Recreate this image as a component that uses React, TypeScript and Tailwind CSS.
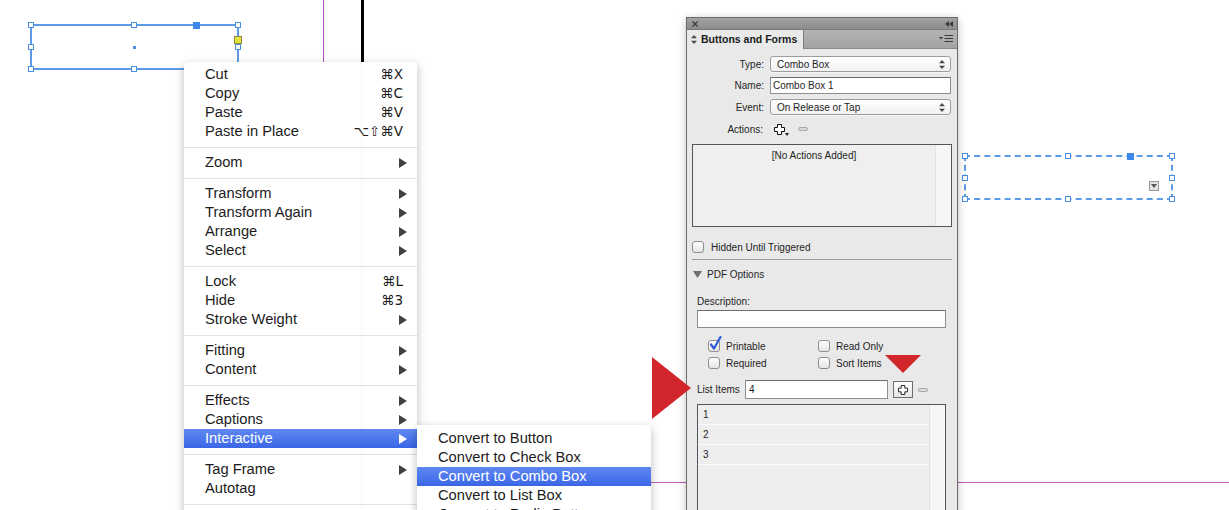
import React from "react";

type Item = { label: string; sc?: string; sub?: boolean; hi?: boolean };

const groups: Item[][] = [
  [
    { label: "Cut", sc: "⌘X" },
    { label: "Copy", sc: "⌘C" },
    { label: "Paste", sc: "⌘V" },
    { label: "Paste in Place", sc: "⌥⇧⌘V" },
  ],
  [{ label: "Zoom", sub: true }],
  [
    { label: "Transform", sub: true },
    { label: "Transform Again", sub: true },
    { label: "Arrange", sub: true },
    { label: "Select", sub: true },
  ],
  [
    { label: "Lock", sc: "⌘L" },
    { label: "Hide", sc: "⌘3" },
    { label: "Stroke Weight", sub: true },
  ],
  [
    { label: "Fitting", sub: true },
    { label: "Content", sub: true },
  ],
  [
    { label: "Effects", sub: true },
    { label: "Captions", sub: true },
    { label: "Interactive", sub: true, hi: true },
  ],
  [{ label: "Tag Frame", sub: true }, { label: "Autotag" }],
  [{ label: "Display Performance", sub: true }],
];

const subItems = [
  "Convert to Button",
  "Convert to Check Box",
  "Convert to Combo Box",
  "Convert to List Box",
  "Convert to Radio Button",
];

function Arrow({ white }: { white?: boolean }) {
  return (
    <svg width="8" height="10" viewBox="0 0 8 10" className="block">
      <path d="M0 0 L8 5 L0 10 Z" fill={white ? "#ffffff" : "#404040"} />
    </svg>
  );
}

function MenuRow({ it }: { it: Item }) {
  return (
    <div
      className={
        "flex h-[19px] items-center justify-between pl-[21px] pr-[10px] text-[14.7px] leading-[19px] " +
        (it.hi ? "bg-gradient-to-b from-[#6088f2] to-[#3a66e6] text-white" : "text-[#1c1c1c]")
      }
    >
      <span>{it.label}</span>
      {it.sc ? <span className="mr-[4px] font-['DejaVu_Sans','Liberation_Sans',sans-serif] text-[13.5px]">{it.sc}</span> : null}
      {it.sub ? <Arrow white={it.hi} /> : null}
    </div>
  );
}

function Sep() {
  return (
    <div className="h-[12px] pt-[6px]">
      <div className="h-px bg-[#e2e2e2]" />
    </div>
  );
}

function Handle({ cls, filled }: { cls: string; filled?: boolean }) {
  return (
    <div
      className={
        "absolute " +
        cls +
        (filled ? " w-[7px] h-[7px] bg-[#3d86ea]" : " w-[6px] h-[6px] bg-white border border-[#4a8ee0]")
      }
    />
  );
}

function UpDown() {
  return (
    <svg width="6" height="9" viewBox="0 0 6 9" className="block">
      <path d="M3 0 L6 3.3 L0 3.3 Z M3 9 L6 5.7 L0 5.7 Z" fill="#4a4a4a" />
    </svg>
  );
}

function Select({ text }: { text: string }) {
  return (
    <div className="ml-[6px] flex h-[16px] w-[181px] items-center justify-between rounded-[3px] border border-[#9c9c9c] bg-gradient-to-b from-white to-[#f1f1f1] pl-[6px] pr-[5px] shadow-[0_1px_0_rgba(255,255,255,0.6)]">
      <span>{text}</span>
      <UpDown />
    </div>
  );
}

function Check({ checked }: { checked?: boolean }) {
  return (
    <div className="relative h-[12px] w-[12px] shrink-0 rounded-[3px] border border-[#8f8f8f] bg-gradient-to-b from-white to-[#e4e4e4]">
      {checked ? (
        <svg width="14" height="15" viewBox="0 0 14 15" className="absolute left-[0px] top-[-5px]">
          <path d="M2 8.5 L5 12.5 L11.5 1" fill="none" stroke="#2d5cd2" strokeWidth="2.2" strokeLinecap="round" strokeLinejoin="round" />
        </svg>
      ) : null}
    </div>
  );
}

function HollowPlus({ size = 11 }: { size?: number }) {
  return (
    <svg width={size} height={size} viewBox="0 0 11 11" className="block">
      <path d="M3.5 0.5 H7.5 V3.5 H10.5 V7.5 H7.5 V10.5 H3.5 V7.5 H0.5 V3.5 H3.5 Z" fill="#fff" stroke="#111" strokeWidth="1" />
    </svg>
  );
}

function Minus() {
  return <div className="h-[4px] w-[10px] rounded-[2px] border border-[#a8a8a8] bg-[#dcdcdc]" />;
}

export default function App() {
  return (
    <div className="relative h-[510px] w-[1229px] overflow-hidden bg-white font-['Liberation_Sans','DejaVu_Sans',sans-serif]">
      {/* guides */}
      <div className="absolute left-[323px] top-0 h-[70px] w-px bg-[#b050c4]" />
      <div className="absolute left-[361px] top-0 h-[70px] w-[3px] bg-black" />
      <div className="absolute left-[640px] top-[482px] h-px w-[589px] bg-[#c458c0]" />

      {/* left frame */}
      <div className="absolute left-[30px] top-[24px] h-[46px] w-[209px] border-2 border-[#5c9be6]" />
      <Handle cls="left-[28px] top-[22px]" />
      <Handle cls="left-[131px] top-[22px]" />
      <Handle cls="left-[235px] top-[22px]" />
      <Handle cls="left-[28px] top-[44px]" />
      <Handle cls="left-[235px] top-[44px]" />
      <Handle cls="left-[28px] top-[66px]" />
      <Handle cls="left-[131px] top-[66px]" />
      <Handle cls="left-[235px] top-[66px]" />
      <Handle cls="left-[193px] top-[22px]" filled />
      <div className="absolute left-[234px] top-[36px] h-[8px] w-[8px] border border-[#8a8a3a] bg-[#e6e23a]" />
      <div className="absolute left-[133px] top-[46px] h-[3px] w-[3px] bg-[#4a8ee0]" />

      {/* right frame */}
      <div className="absolute left-[964px] top-[155px] h-[45px] w-[209px] border-2 border-dashed border-[#5c9be6]" />
      <Handle cls="left-[962px] top-[153px]" />
      <Handle cls="left-[1065px] top-[153px]" />
      <Handle cls="left-[1169px] top-[153px]" />
      <Handle cls="left-[962px] top-[175px]" />
      <Handle cls="left-[1169px] top-[175px]" />
      <Handle cls="left-[962px] top-[196px]" />
      <Handle cls="left-[1065px] top-[196px]" />
      <Handle cls="left-[1169px] top-[196px]" />
      <Handle cls="left-[1127px] top-[153px]" filled />
      <div className="absolute left-[1149px] top-[181px] flex h-[10px] w-[10px] items-center justify-center border border-[#9a9a9a] bg-[#e2e2e2]">
        <svg width="6" height="4" viewBox="0 0 6 4"><path d="M0 0 H6 L3 4 Z" fill="#555" /></svg>
      </div>

      {/* context menu */}
      <div className="absolute left-[184px] top-[62px] h-[480px] w-[233px] overflow-hidden rounded-t-[4px] bg-white pt-[3px] shadow-[0_3px_10px_rgba(0,0,0,0.28)]">
        <div className="pointer-events-none absolute left-[177px] top-0 h-full w-px bg-[#f7f7f7]" />
        {groups.map((g, gi) => (
          <div key={gi} className="relative">
            {g.map((it) => (
              <MenuRow key={it.label} it={it} />
            ))}
            {gi < groups.length - 1 ? <Sep /> : null}
          </div>
        ))}
      </div>

      {/* submenu */}
      <div className="absolute left-[417px] top-[425px] h-[120px] w-[234px] rounded-tr-[4px] bg-white pt-[4px] shadow-[0_3px_10px_rgba(0,0,0,0.28)]">
        {subItems.map((s, i) => (
          <div
            key={s}
            className={
              "flex h-[19px] items-center pl-[21px] text-[14.7px] leading-[19px] " +
              (i === 2 ? "bg-gradient-to-b from-[#6088f2] to-[#3a66e6] text-white" : "text-[#1c1c1c]")
            }
          >
            {s}
          </div>
        ))}
      </div>

      {/* panel */}
      <div className="absolute left-[686px] top-[17px] h-[510px] w-[272px] overflow-hidden border border-[#6a6a6a] bg-[#e9e9e9] text-[10px] text-[#1e1e1e] shadow-[0_2px_8px_rgba(0,0,0,0.25)]">
        {/* title bar */}
        <div className="flex h-[11px] shrink-0 items-center justify-between bg-gradient-to-b from-[#a3a3a3] to-[#8c8c8c] pl-[5px] pr-[4px]">
          <svg width="6" height="6" viewBox="0 0 6 6" className="block">
            <path d="M0.5 0.5 L5.5 5.5 M5.5 0.5 L0.5 5.5" stroke="#3a3a3a" strokeWidth="1.2" />
          </svg>
          <svg width="8" height="6" viewBox="0 0 8 6" className="block">
            <path d="M0 3 L4 0 V6 Z M4 3 L8 0 V6 Z" fill="#3a3a3a" />
          </svg>
        </div>
        {/* tab row */}
        <div className="flex h-[20px] shrink-0 border-t border-[#7a7a7a]">
          <div className="flex w-[117px] items-center border-r border-[#7d7d7d] bg-[#e9e9e9] pl-[4px]">
            <UpDown />
            <span className="ml-[4px] text-[10.5px] font-bold text-[#1a1a1a]">Buttons and Forms</span>
          </div>
          <div className="flex flex-1 items-center justify-end border-b border-[#8a8a8a] bg-gradient-to-b from-[#b4b4b4] to-[#a3a3a3] pr-[4px]">
            <svg width="14" height="8" viewBox="0 0 14 8" className="block">
              <path d="M0 2 H4 L2 4.5 Z" fill="#3a3a3a" />
              <path d="M5.5 0.5 H14 M5.5 3.5 H14 M5.5 6.5 H14" stroke="#3a3a3a" strokeWidth="1" />
            </svg>
          </div>
        </div>

        {/* body */}
        <div className="flex flex-col pt-[7px]">
          <div className="flex h-[16px] shrink-0 items-center">
            <div className="w-[77px] text-right">Type:</div>
            <Select text="Combo Box" />
          </div>
          <div className="mt-[5px] flex h-[17px] shrink-0 items-center">
            <div className="w-[77px] text-right">Name:</div>
            <div className="ml-[6px] flex h-[17px] w-[181px] items-center border border-[#8e8e8e] border-t-[#6e6e6e] bg-white pl-[2px]">
              Combo Box 1
            </div>
          </div>
          <div className="mt-[5px] flex h-[16px] shrink-0 items-center">
            <div className="w-[77px] text-right">Event:</div>
            <Select text="On Release or Tap" />
          </div>
          <div className="mt-[6px] flex h-[16px] shrink-0 items-center">
            <div className="w-[76px] text-right">Actions:</div>
            <div className="ml-[11px] flex items-end">
              <HollowPlus />
              <svg width="4" height="3" viewBox="0 0 4 3" className="mb-[-1px] block"><path d="M0 0 H4 L2 3 Z" fill="#222" /></svg>
            </div>
            <div className="ml-[9px]"><Minus /></div>
          </div>
          <div className="ml-[5px] mt-[7px] flex h-[83px] w-[260px] shrink-0 border border-[#555]">
            <div className="flex-1 bg-[#efefef] pt-[3px] text-center">[No Actions Added]</div>
            <div className="w-[16px] border-l border-[#e2e2e2] bg-[#f6f6f6]" />
          </div>
          <div className="ml-[5px] mt-[14px] flex h-[12px] shrink-0 items-center">
            <Check />
            <span className="ml-[7px]">Hidden Until Triggered</span>
          </div>
          <div className="ml-[5px] mt-[6px] h-px w-[260px] shrink-0 bg-[#9a9a9a]" />
          <div className="ml-[6px] mt-[8px] flex h-[12px] shrink-0 items-center">
            <svg width="9" height="7" viewBox="0 0 9 7" className="block"><path d="M0 0 H9 L4.5 7 Z" fill="#6d6d6d" /></svg>
            <span className="ml-[5px]">PDF Options</span>
          </div>
          <div className="ml-[10px] mt-[15px] flex h-[12px] shrink-0 items-center">Description:</div>
          <div className="ml-[10px] mt-[3px] h-[18px] w-[249px] shrink-0 border border-[#8e8e8e] border-t-[#6e6e6e] bg-white" />
          <div className="mt-[12px] flex h-[12px] shrink-0 items-center">
            <div className="ml-[21px] flex w-[110px] items-center">
              <Check checked />
              <span className="ml-[6px]">Printable</span>
            </div>
            <div className="flex items-center">
              <Check />
              <span className="ml-[6px]">Read Only</span>
            </div>
          </div>
          <div className="mt-[5px] flex h-[12px] shrink-0 items-center">
            <div className="ml-[21px] flex w-[110px] items-center">
              <Check />
              <span className="ml-[6px]">Required</span>
            </div>
            <div className="flex items-center">
              <Check />
              <span className="ml-[6px]">Sort Items</span>
            </div>
          </div>
          <div className="mt-[11px] flex h-[19px] shrink-0 items-center">
            <span className="ml-[10px] w-[48px]">List Items</span>
            <div className="flex h-[19px] w-[143px] items-center border border-[#8e8e8e] border-t-[#6e6e6e] bg-white pl-[3px]">4</div>
            <div className="ml-[5px] flex h-[17px] w-[20px] items-center justify-center border border-[#6e6e6e] bg-gradient-to-b from-white to-[#e4e4e4]">
              <HollowPlus size={10} />
            </div>
            <div className="ml-[5px]"><Minus /></div>
          </div>
          <div className="ml-[10px] mt-[5px] flex h-[200px] w-[249px] shrink-0 border border-[#555]">
            <div className="flex-1 bg-[#eeeeee]">
              {["1", "2", "3"].map((n) => (
                <div key={n} className="flex h-[20px] items-center border-b border-[#fbfbfb] pl-[5px]">
                  {n}
                </div>
              ))}
            </div>
            <div className="w-[16px] border-l border-[#e2e2e2] bg-[#f6f6f6]" />
          </div>
        </div>
      </div>

      {/* red annotation triangles */}
      <svg width="40" height="62" viewBox="0 0 40 62" className="absolute left-[652px] top-[357px]">
        <path d="M0 0 L39 31 L0 62 Z" fill="#d2262c" />
      </svg>
      <svg width="36" height="18" viewBox="0 0 36 18" className="absolute left-[885px] top-[355px]">
        <path d="M0 0 H36 L18 18 Z" fill="#d2262c" />
      </svg>
    </div>
  );
}
